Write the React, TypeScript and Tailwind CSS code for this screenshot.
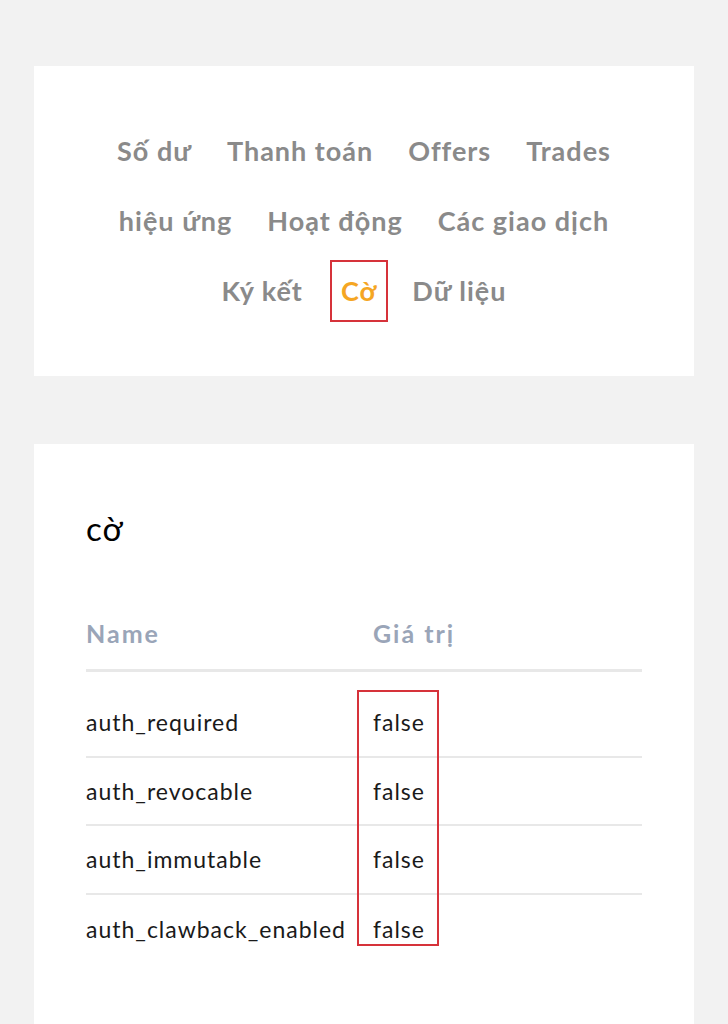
const navRows = [
  ['Số dư', 'Thanh toán', 'Offers', 'Trades'],
  ['hiệu ứng', 'Hoạt động', 'Các giao dịch'],
  ['Ký kết', 'Cờ', 'Dữ liệu'],
];

const flags = ['auth_required', 'auth_revocable', 'auth_immutable', 'auth_clawback_enabled'];

export default function App() {
  return (
    <div
      className="min-h-[1024px] bg-[#f2f2f2] px-[34px] pt-[66px] pb-0"
      style={{ fontFamily: 'Lato, "Noto Sans", sans-serif' }}
    >
      {/* Tabs */}
      <div className="bg-white py-[54px] flex flex-col items-center gap-[8px]">
        {navRows.map((row, i) => (
          <div key={i} className="flex justify-center gap-[13px]">
            {row.map((label) => {
              const active = label === 'Cờ';
              return (
                <a
                  key={label}
                  className={
                    active
                      ? 'h-[62px] px-[9px] ml-[3px] flex items-center text-[27px] tracking-[1px] font-bold text-[#f5a623] border-2 border-[#d6323a]'
                      : 'h-[62px] px-[11px] flex items-center text-[27px] tracking-[1px] font-bold text-[#8a8a8a]'
                  }
                >
                  {label}
                </a>
              );
            })}
          </div>
        ))}
      </div>

      {/* Flags table */}
      <div className="mt-[68px] bg-white px-[52px] pt-[64px] pb-[80px]">
        <h2 className="text-[33px] leading-[40px] tracking-[1px] text-black">cờ</h2>

        <div className="mt-[69px]">
          <div className="flex border-b-[3px] border-[#e8e8e8] pb-[20px] text-[25px] leading-[32px] tracking-[2px] font-bold text-[#9aa5b8]">
            <div className="w-[287px]">Name</div>
            <div>Giá trị</div>
          </div>

          <div className="relative pt-[17px]">
            {flags.map((f, i) => (
              <div
                key={f}
                className={
                  i < flags.length - 1
                    ? 'flex items-center h-[68.5px] border-b-2 border-[#e8e8e8] text-[23px] tracking-[1px] text-[#1a1a1a]'
                    : 'flex items-center h-[68.5px] text-[23px] tracking-[1px] text-[#1a1a1a]'
                }
              >
                <div className="w-[287px] whitespace-nowrap">{f}</div>
                <div>false</div>
              </div>
            ))}
            <div className="absolute left-[271px] top-[18px] w-[82px] h-[256px] border-2 border-[#d6323a]" />
          </div>
        </div>
      </div>
    </div>
  );
}
